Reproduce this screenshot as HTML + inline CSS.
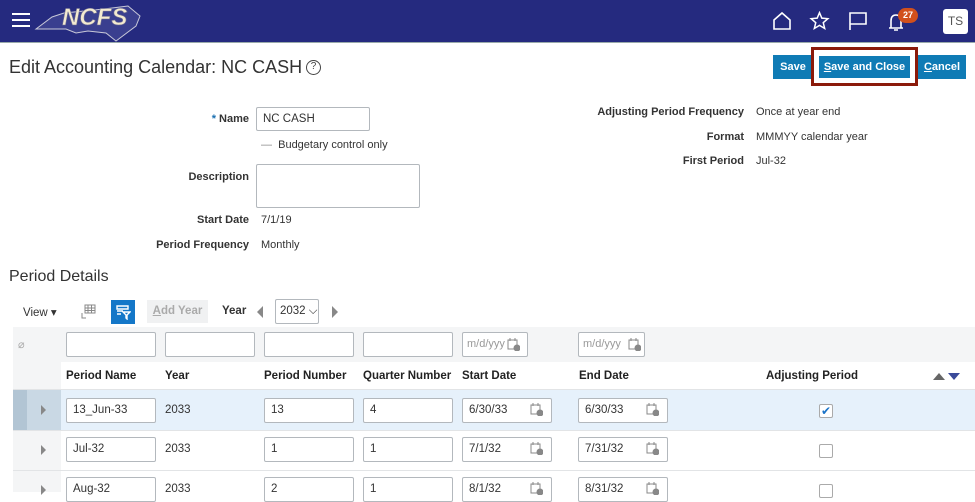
<!DOCTYPE html>
<html><head><meta charset="utf-8"><style>
*{box-sizing:border-box;margin:0;padding:0}
body{width:975px;height:492px;overflow:hidden;background:#fff;font-family:"Liberation Sans",Arial,sans-serif;color:#333;position:relative;font-size:11px}
.a{position:absolute;white-space:nowrap}
.hdr{position:absolute;left:0;top:0;width:975px;height:43px;background:#252a7f;border-bottom:1px solid #9aa}
.lbl{position:absolute;font-weight:bold;color:#333;text-align:right;font-size:11px}
.inp{position:absolute;border:1px solid #b3b8bd;border-radius:2px;background:#fff;font-size:11.5px;color:#333;padding-left:6px;line-height:23px}
.th{position:absolute;font-weight:bold;font-size:11.5px;color:#222;top:370px}
.btn{position:absolute;background:#0f7bb5;color:#fff;font-weight:bold;font-size:11px;text-align:center;line-height:24px;top:55px;height:24px}
.cal{position:absolute;width:13px;height:13px}
.t{font-size:11.5px}
</style></head><body>
<div class="hdr"></div>
<div class="a" style="left:12px;top:13px;width:18px;height:2px;background:#fff;box-shadow:0 6px 0 #fff,0 12px 0 #fff"></div>
<svg class="a" style="left:34px;top:1px" width="112" height="42" viewBox="0 0 112 42"><path d="M2 28 L18 16 L30 12 L70 8 L94 5 L106 15 L102 25 L94 31 L82 40 L72 32 L54 30 L42 32 L32 28 Z" fill="#3a3f8f" stroke="#c8c8d8" stroke-width="1"/><text x="28" y="24" font-family="Liberation Sans" font-weight="bold" font-style="italic" font-size="24" fill="#f3ead0" stroke="#6a6a90" stroke-width=".6">NCFS</text></svg>
<svg class="a" style="left:772px;top:11px" width="20" height="20" viewBox="0 0 20 20"><path d="M2 9 L10 2 L18 9 L18 18 L2 18 Z" fill="none" stroke="#fff" stroke-width="1.6"/></svg>
<svg class="a" style="left:809px;top:11px" width="21" height="20" viewBox="0 0 24 24"><path d="M12 2 L14.8 8.6 L22 9.2 L16.5 14 L18.2 21 L12 17.3 L5.8 21 L7.5 14 L2 9.2 L9.2 8.6 Z" fill="none" stroke="#fff" stroke-width="1.8"/></svg>
<svg class="a" style="left:848px;top:11px" width="20" height="20" viewBox="0 0 20 20"><path d="M2 19 L2 2 L18 2 L18 13 L2 13" fill="none" stroke="#fff" stroke-width="1.6"/></svg>
<svg class="a" style="left:886px;top:12px" width="20" height="20" viewBox="0 0 20 20"><path d="M3 16 L17 16 M5 16 L5 9 Q5 3 10 3 Q15 3 15 9 L15 16 M8 18 L12 18" fill="none" stroke="#fff" stroke-width="1.6"/></svg>
<div class="a" style="left:898px;top:8px;width:20px;height:15px;border-radius:8px;background:#d2501c;color:#fff;font-size:9px;font-weight:bold;text-align:center;line-height:15px">27</div>
<div class="a" style="left:943px;top:9px;width:25px;height:25px;border-radius:3px;background:#fff;color:#555;font-size:12px;text-align:center;line-height:25px">TS</div>

<div class="a" style="left:9px;top:57px;font-size:18px;color:#333">Edit Accounting Calendar: NC CASH</div>
<div class="a" style="left:306px;top:60px;width:15px;height:15px;border:1.5px solid #444;border-radius:50%;font-size:10px;text-align:center;line-height:12px;color:#444">?</div>

<div class="btn" style="left:773px;width:40px">Save</div>
<div class="a" style="left:811px;top:47px;width:107px;height:39px;border:3px solid #8b1a0a"></div>
<div class="btn" style="left:818px;width:93px;box-shadow:0 0 0 1px #fff inset"><u>S</u>ave and Close</div>
<div class="btn" style="left:918px;width:48px"><u>C</u>ancel</div>

<div class="lbl" style="left:150px;width:99px;top:113px"><span style="color:#1a6fb0">*</span> Name</div>
<div class="inp" style="left:256px;top:107px;width:114px;height:24px">NC CASH</div>
<div class="a" style="left:261px;top:139px;color:#333"><span style="color:#888">—</span>&nbsp; Budgetary control only</div>
<div class="lbl" style="left:150px;width:99px;top:171px">Description</div>
<div class="inp" style="left:256px;top:164px;width:164px;height:44px"></div>
<div class="lbl" style="left:150px;width:99px;top:214px">Start Date</div>
<div class="a" style="left:261px;top:214px">7/1/19</div>
<div class="lbl" style="left:100px;width:149px;top:239px">Period Frequency</div>
<div class="a" style="left:261px;top:239px">Monthly</div>

<div class="lbl" style="left:560px;width:184px;top:106px">Adjusting Period Frequency</div>
<div class="a" style="left:756px;top:106px">Once at year end</div>
<div class="lbl" style="left:560px;width:184px;top:131px">Format</div>
<div class="a" style="left:756px;top:131px">MMMYY calendar year</div>
<div class="lbl" style="left:560px;width:184px;top:155px">First Period</div>
<div class="a" style="left:756px;top:155px">Jul-32</div>

<div class="a" style="left:9px;top:268px;font-size:16px;color:#333">Period Details</div>

<div class="a t" style="left:23px;top:305px">View ▾</div>
<svg class="a" style="left:81px;top:304px" width="15" height="15" viewBox="0 0 15 15"><path d="M4 1h10v8H4z M4 4h10 M4 6.5h10 M7 1v8 M10.5 1v8 M1 9v5h4" fill="none" stroke="#888" stroke-width="1"/></svg>
<div class="a" style="left:111px;top:300px;width:24px;height:24px;background:#1477c8"></div>
<svg class="a" style="left:115px;top:304px" width="16" height="16" viewBox="0 0 16 16"><path d="M2 2h11v3H2z M2 7h6 M2 10h4 M8 8h7l-3 3v4l-1-1v-3z" fill="none" stroke="#fff" stroke-width="1.4"/></svg>
<div class="a t" style="left:147px;top:300px;width:61px;height:23px;background:#f0f1f2;color:#aaa;font-weight:bold;text-align:center;line-height:23px"><u>A</u>dd Year</div>
<div class="a t" style="left:222px;top:305px;font-weight:bold">Year</div>
<div class="a" style="left:257px;top:306px;width:0;height:0;border-top:6px solid transparent;border-bottom:6px solid transparent;border-right:6px solid #888"></div>
<div class="inp" style="left:275px;top:299px;width:44px;height:25px;padding-left:4px;line-height:23px">2032 ⌵</div>
<div class="a" style="left:332px;top:306px;width:0;height:0;border-top:6px solid transparent;border-bottom:6px solid transparent;border-left:6px solid #888"></div>

<div class="a" style="left:13px;top:327px;width:962px;height:35px;background:#f4f5f6"></div>
<div class="a" style="left:13px;top:327px;width:48px;height:165px;background:#f4f5f6"></div>
<div class="a" style="left:18px;top:338px;color:#aaa;font-size:11px">⌀</div>
<div class="inp" style="left:66px;top:332px;width:90px;height:25px"></div>
<div class="inp" style="left:165px;top:332px;width:90px;height:25px"></div>
<div class="inp" style="left:264px;top:332px;width:90px;height:25px"></div>
<div class="inp" style="left:363px;top:332px;width:90px;height:25px"></div>
<div class="inp" style="left:462px;top:332px;width:66px;height:25px;color:#999;font-size:11px;padding-left:4px">m/d/yyy</div>
<div class="inp" style="left:578px;top:332px;width:67px;height:25px;color:#999;font-size:11px;padding-left:4px">m/d/yyy</div>

<div class="th" style="left:66px">Period Name</div>
<div class="th" style="left:165px">Year</div>
<div class="th" style="left:264px">Period Number</div>
<div class="th" style="left:363px">Quarter Number</div>
<div class="th" style="left:462px">Start Date</div>
<div class="th" style="left:579px">End Date</div>
<div class="th" style="left:766px">Adjusting Period</div>
<div class="a" style="left:933px;top:373px;border-left:6px solid transparent;border-right:6px solid transparent;border-bottom:7px solid #666"></div>
<div class="a" style="left:948px;top:373px;border-left:6px solid transparent;border-right:6px solid transparent;border-top:7px solid #3a4a9a"></div>

<div class="a" style="left:13px;top:390px;width:962px;height:40px;background:#e6f1fb"></div>
<div class="a" style="left:13px;top:390px;width:14px;height:40px;background:#b2c5d4"></div>
<div class="a" style="left:27px;top:390px;width:34px;height:40px;background:#c9d8e4"></div>
<div class="a" style="left:13px;top:430px;width:962px;height:1px;background:#e2e4e6"></div>
<div class="a" style="left:13px;top:470px;width:962px;height:1px;background:#e2e4e6"></div>
<div class="a" style="left:13px;top:389px;width:962px;height:1px;background:#e2e4e6"></div>

<div class="a" style="left:41px;top:405px;border-top:5px solid transparent;border-bottom:5px solid transparent;border-left:5px solid #888"></div>
<div class="a" style="left:41px;top:445px;border-top:5px solid transparent;border-bottom:5px solid transparent;border-left:5px solid #888"></div>
<div class="a" style="left:41px;top:485px;border-top:5px solid transparent;border-bottom:5px solid transparent;border-left:5px solid #888"></div>

<div class="inp" style="left:66px;top:398px;width:90px;height:25px">13_Jun-33</div>
<div class="a t" style="left:165px;top:404px">2033</div>
<div class="inp" style="left:264px;top:398px;width:90px;height:25px">13</div>
<div class="inp" style="left:363px;top:398px;width:90px;height:25px">4</div>
<div class="inp" style="left:462px;top:398px;width:90px;height:25px">6/30/33</div>
<div class="inp" style="left:578px;top:398px;width:90px;height:25px">6/30/33</div>
<div class="a" style="left:819px;top:404px;width:14px;height:14px;border:1px solid #aaa;border-radius:2px;background:#fff;color:#1a73c8;font-size:12px;line-height:12px;text-align:center">✔</div>

<div class="inp" style="left:66px;top:437px;width:90px;height:25px">Jul-32</div>
<div class="a t" style="left:165px;top:443px">2033</div>
<div class="inp" style="left:264px;top:437px;width:90px;height:25px">1</div>
<div class="inp" style="left:363px;top:437px;width:90px;height:25px">1</div>
<div class="inp" style="left:462px;top:437px;width:90px;height:25px">7/1/32</div>
<div class="inp" style="left:578px;top:437px;width:90px;height:25px">7/31/32</div>
<div class="a" style="left:819px;top:444px;width:14px;height:14px;border:1px solid #aaa;border-radius:2px;background:#fff"></div>

<div class="inp" style="left:66px;top:477px;width:90px;height:25px">Aug-32</div>
<div class="a t" style="left:165px;top:483px">2033</div>
<div class="inp" style="left:264px;top:477px;width:90px;height:25px">2</div>
<div class="inp" style="left:363px;top:477px;width:90px;height:25px">1</div>
<div class="inp" style="left:462px;top:477px;width:90px;height:25px">8/1/32</div>
<div class="inp" style="left:578px;top:477px;width:90px;height:25px">8/31/32</div>
<div class="a" style="left:819px;top:484px;width:14px;height:14px;border:1px solid #aaa;border-radius:2px;background:#fff"></div>

<svg width="0" height="0" style="position:absolute"><defs><g id="c"><rect x="1" y="2" width="9" height="9" fill="none" stroke="#888"/><path d="M3 0v3M8 0v3" stroke="#888"/><circle cx="10" cy="10" r="3.5" fill="#888"/></g></defs></svg>
<svg class="cal" style="left:507px;top:338px"><use href="#c"/></svg>
<svg class="cal" style="left:628px;top:338px"><use href="#c"/></svg>
<svg class="cal" style="left:530px;top:403px"><use href="#c"/></svg>
<svg class="cal" style="left:646px;top:403px"><use href="#c"/></svg>
<svg class="cal" style="left:530px;top:442px"><use href="#c"/></svg>
<svg class="cal" style="left:646px;top:442px"><use href="#c"/></svg>
<svg class="cal" style="left:530px;top:482px"><use href="#c"/></svg>
<svg class="cal" style="left:646px;top:482px"><use href="#c"/></svg>
</body></html>
